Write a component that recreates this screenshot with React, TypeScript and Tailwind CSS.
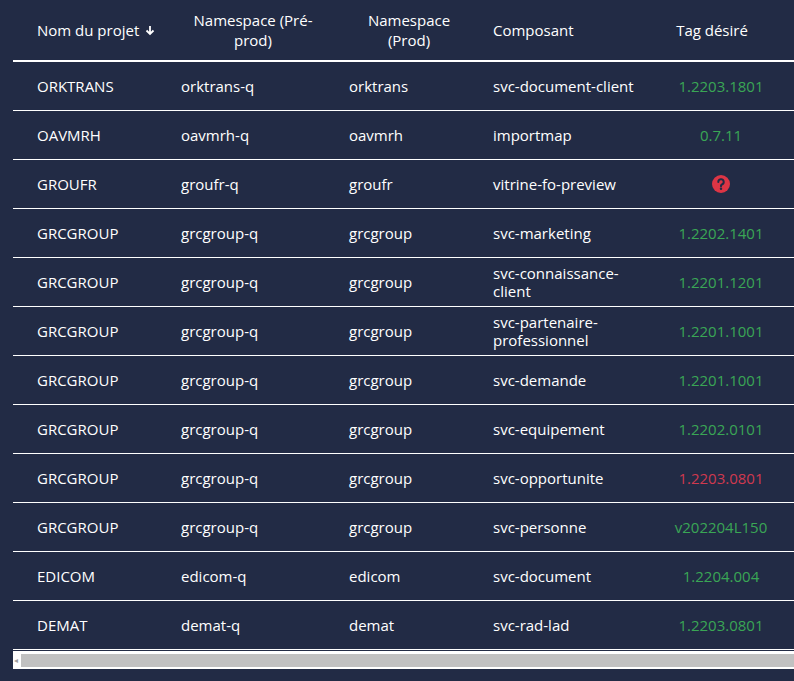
import React from "react";

const rows: [string, string, string, string[], string, "g" | "r" | "q"][] = [
  ["ORKTRANS", "orktrans-q", "orktrans", ["svc-document-client"], "1.2203.1801", "g"],
  ["OAVMRH", "oavmrh-q", "oavmrh", ["importmap"], "0.7.11", "g"],
  ["GROUFR", "groufr-q", "groufr", ["vitrine-fo-preview"], "", "q"],
  ["GRCGROUP", "grcgroup-q", "grcgroup", ["svc-marketing"], "1.2202.1401", "g"],
  ["GRCGROUP", "grcgroup-q", "grcgroup", ["svc-connaissance-", "client"], "1.2201.1201", "g"],
  ["GRCGROUP", "grcgroup-q", "grcgroup", ["svc-partenaire-", "professionnel"], "1.2201.1001", "g"],
  ["GRCGROUP", "grcgroup-q", "grcgroup", ["svc-demande"], "1.2201.1001", "g"],
  ["GRCGROUP", "grcgroup-q", "grcgroup", ["svc-equipement"], "1.2202.0101", "g"],
  ["GRCGROUP", "grcgroup-q", "grcgroup", ["svc-opportunite"], "1.2203.0801", "r"],
  ["GRCGROUP", "grcgroup-q", "grcgroup", ["svc-personne"], "v202204L150", "g"],
  ["EDICOM", "edicom-q", "edicom", ["svc-document"], "1.2204.004", "g"],
  ["DEMAT", "demat-q", "demat", ["svc-rad-lad"], "1.2203.0801", "g"],
];

export default function App() {
  return (
    <div className="w-[794px] h-[681px] bg-[#222b45] overflow-hidden text-white text-[15px] leading-[18px]" style={{ fontFamily: '"Open Sans", sans-serif' }}>
      <div className="ml-[13px] w-[800px]">
        <div className="flex h-[62px] items-center border-b-2 border-white">
          <div className="w-[144px] pl-[24px] flex items-center gap-[6px] whitespace-nowrap">
            Nom du projet
            <svg width="10" height="11" viewBox="0 0 10 11"><path d="M5 1v8M1.5 5.5L5 9l3.5-3.5" stroke="white" strokeWidth="1.8" fill="none" /></svg>
          </div>
          <div className="w-[168px] pl-[24px] text-center leading-[20px]">Namespace (Pré-<br />prod)</div>
          <div className="w-[144px] pl-[24px] text-center leading-[20px]">Namespace<br />(Prod)</div>
          <div className="w-[184px] pl-[24px]">Composant</div>
          <div className="w-[136px] pl-[10px] pr-[28px] text-center whitespace-nowrap">Tag désiré</div>
        </div>
        {rows.map((r, i) => (
          <div key={i} className="flex h-[49px] items-center border-b border-white">
            <div className="w-[144px] pl-[24px]">{r[0]}</div>
            <div className="w-[168px] pl-[24px]">{r[1]}</div>
            <div className="w-[144px] pl-[24px]">{r[2]}</div>
            <div className="w-[184px] pl-[24px]">{r[3].map((t, j) => <div key={j}>{t}</div>)}</div>
            <div className="w-[136px] px-[20px] text-center flex justify-center">
              {r[5] === "q" ? (
                <svg width="18" height="18" viewBox="0 0 18 18">
                  <circle cx="9" cy="9" r="9" fill="#dc3545" />
                  <path d="M6.3 7a2.7 2.7 0 1 1 3.6 2.5c-.6.3-.9.7-.9 1.3v.4" stroke="#222b45" strokeWidth="2" fill="none" strokeLinecap="round" />
                  <circle cx="9" cy="13.8" r="1.2" fill="#222b45" />
                </svg>
              ) : (
                <span className={r[5] === "r" ? "text-[#d0394f]" : "text-[#3aa655]"}>{r[4]}</span>
              )}
            </div>
          </div>
        ))}
        <div className="mt-[1px] h-[18px] bg-white flex items-center">
          <span className="w-[8px] text-[8px] leading-[8px] text-[#a0a0a0] pl-[1px]">◂</span>
          <div className="h-[13px] flex-1 bg-[#c1c1c1]"></div>
        </div>
      </div>
    </div>
  );
}
